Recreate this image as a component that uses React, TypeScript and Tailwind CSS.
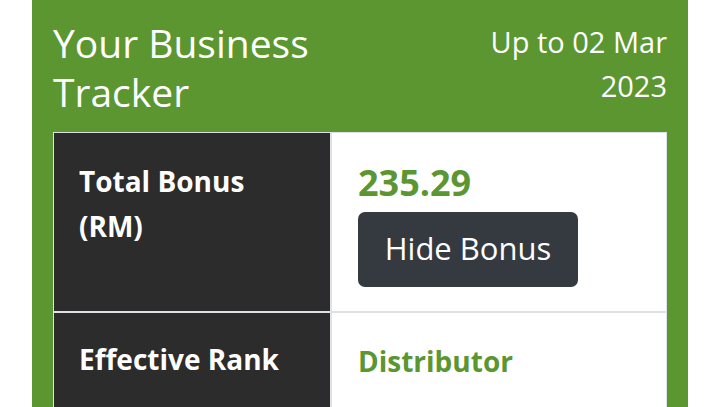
import React from 'react';

const App: React.FC = () => {
  return (
    <div className="w-[720px] h-[407px] overflow-hidden bg-white" style={{ fontFamily: '"Open Sans", Lato, sans-serif' }}>
      <div className="mx-[32px] h-full bg-[#5b9631] px-[21px] pt-[18px]">
        <div className="flex justify-between">
          <h1 className="text-[39px] leading-[49px] font-normal text-white">
            Your Business
            <br />
            Tracker
          </h1>
          <p className="pt-[2px] text-right text-[29px] leading-[44px] text-white">
            Up to 02 Mar
            <br />
            2023
          </p>
        </div>

        <div className="mt-[16px] grid grid-cols-[278px_1fr] border border-[#dee2e6] bg-white">
          <div className="h-[180px] border-r-2 border-b-2 border-[#dee2e6] bg-[#2c2c2c] px-[25px] pt-[26px]">
            <p className="text-[28px] leading-[45px] font-bold text-white">
              Total Bonus
              <br />
              (RM)
            </p>
          </div>
          <div className="h-[180px] border-b-2 border-[#dee2e6] px-[26px] pt-[30px]">
            <p className="text-[36px] leading-[40px] font-bold text-[#5b9631]">235.29</p>
            <button className="mt-[9px] flex h-[75px] w-[220px] items-center justify-center rounded-[7px] bg-[#343a40] pb-[2px] text-[31px] text-white">
              Hide Bonus
            </button>
          </div>
          <div className="h-[100px] border-r-2 border-b-2 border-[#dee2e6] bg-[#2c2c2c] px-[25px] pt-[24px]">
            <p className="text-[28px] leading-[45px] font-bold text-white">Effective Rank</p>
          </div>
          <div className="h-[100px] border-b-2 border-[#dee2e6] px-[26px] pt-[26px]">
            <p className="text-[28px] leading-[45px] font-bold text-[#5b9631]">Distributor</p>
          </div>
        </div>
      </div>
    </div>
  );
};

export default App;
